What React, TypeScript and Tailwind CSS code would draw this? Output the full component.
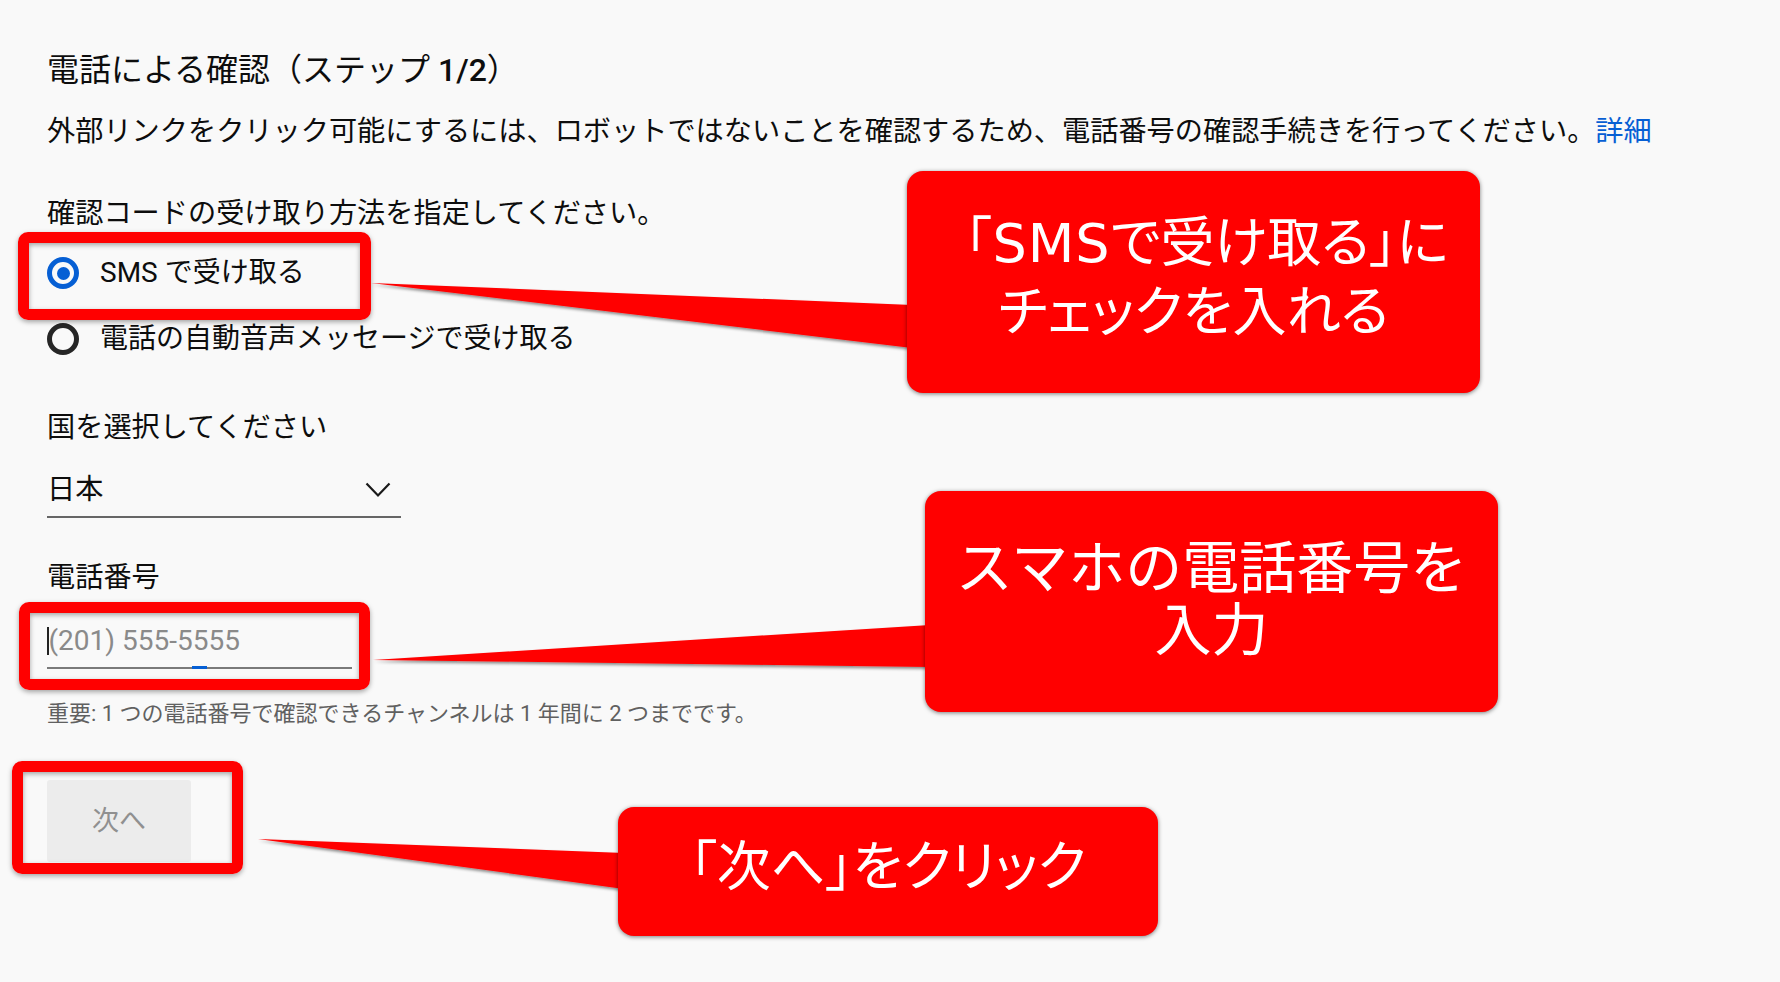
import React from "react";

const SANS = "font-['Roboto','Noto_Sans_CJK_JP',sans-serif]";
const CJK = "font-['Noto_Sans_CJK_JP',sans-serif]";

const RedFrame = ({ className }: { className: string }) => (
  <div
    className={`absolute border-[11px] border-[#ff0000] rounded-[10px] shadow-[0_2px_5px_rgba(0,0,0,0.35),inset_0_2px_5px_rgba(0,0,0,0.35)] ${className}`}
  />
);

const Callout = ({
  className,
  children,
}: {
  className: string;
  children: React.ReactNode;
}) => (
  <div
    className={`absolute flex flex-col items-center justify-center bg-[#ff0000] rounded-[16px] text-white text-center shadow-[0_1px_4px_rgba(0,0,0,0.5)] ${CJK} ${className}`}
  >
    {children}
  </div>
);

const Radio = ({ checked, label }: { checked?: boolean; label: string }) => (
  <div className="flex items-center h-[44px]">
    {checked ? (
      <span className="w-[32px] h-[32px] rounded-full border-[5px] border-[#065fd4] flex items-center justify-center">
        <span className="w-[13px] h-[13px] rounded-full bg-[#065fd4]" />
      </span>
    ) : (
      <span className="w-[32px] h-[32px] rounded-full border-[5px] border-[#262626]" />
    )}
    <span className="ml-[21px] text-[28px] leading-[36px] text-[#0d0d0d]">{label}</span>
  </div>
);

export default function App() {
  return (
    <div className={`relative w-[1780px] h-[982px] overflow-hidden bg-[#f9f9f9] ${SANS}`}>
      {/* Form */}
      <div className="pl-[47px] pt-[50px] text-[#0d0d0d]">
        <h1 className="text-[32px] leading-[40px] font-normal">
          電話による確認（ステップ <span className="font-medium">1/2</span>）
        </h1>

        <p className="mt-[24px] text-[28.2px] leading-[36px]">
          外部リンクをクリック可能にするには、ロボットではないことを確認するため、電話番号の確認手続きを行ってください。
          <span className="text-[#065fd4]">詳細</span>
        </p>

        <p className="mt-[46px] text-[28.2px] leading-[36px]">確認コードの受け取り方法を指定してください。</p>

        <div className="mt-[19px] flex flex-col gap-[22px]">
          <Radio checked label="SMS で受け取る" />
          <Radio label="電話の自動音声メッセージで受け取る" />
        </div>

        <p className="mt-[49px] text-[28.2px] leading-[36px]">国を選択してください</p>

        <div className="mt-[26px] w-[354px] flex items-center justify-between pb-[8px] border-b-2 border-[#666666]">
          <span className="text-[28.2px] leading-[36px]">日本</span>
          <svg width="26" height="16" viewBox="0 0 26 16" className="mr-[10px]">
            <polyline points="1.5,1.5 13,13.5 24.5,1.5" fill="none" stroke="#1a1a1a" strokeWidth="2.2" />
          </svg>
        </div>

        <p className="mt-[42px] text-[28.2px] leading-[36px]">電話番号</p>

        <div className="relative mt-[27px] w-[305px] pb-[8px] border-b-2 border-[#7a7a7a]">
          <div className="flex items-center">
            <span className="w-[1.5px] h-[28px] bg-[#222]" />
            <span className="text-[28px] leading-[36px] text-[#8a8a8a]">(201) 555-5555</span>
          </div>
          <span className="absolute left-[145px] bottom-[-2px] w-[15px] h-[3px] bg-[#065fd4]" />
        </div>

        <p className="mt-[31px] text-[22px] leading-[28px] text-[#606060]">
          重要: 1 つの電話番号で確認できるチャンネルは 1 年間に 2 つまでです。
        </p>

        <button className="mt-[52px] w-[144px] h-[82px] rounded-[3px] bg-[#ececec] text-[27px] text-[#909090] flex items-center justify-center">
          次へ
        </button>
      </div>

      {/* Annotation pointers */}
      <svg
        className="absolute inset-0 pointer-events-none"
        width="1780"
        height="982"
        viewBox="0 0 1780 982"
      >
        <defs>
          <filter id="ds" x="-10%" y="-50%" width="120%" height="200%">
            <feDropShadow dx="1" dy="2" stdDeviation="1.6" floodColor="#000" floodOpacity="0.45" />
          </filter>
        </defs>
        <polygon points="371,283 912,305 912,348" fill="#ff0000" filter="url(#ds)" />
        <polygon points="373,660 930,625 930,667" fill="#ff0000" filter="url(#ds)" />
        <polygon points="258,839 624,853 624,889" fill="#ff0000" filter="url(#ds)" />
      </svg>

      {/* Highlight frames */}
      <RedFrame className="left-[18px] top-[232px] w-[353px] h-[88px]" />
      <RedFrame className="left-[19px] top-[602px] w-[351px] h-[88px]" />
      <RedFrame className="left-[12px] top-[761px] w-[231px] h-[113px]" />

      {/* Callouts */}
      <Callout className="left-[907px] top-[171px] w-[573px] h-[222px] pb-[18px] text-[54px] leading-[64px] [font-feature-settings:'palt']">
        <span>
          <span className="[font-feature-settings:normal]">「</span>
          <span className="font-['DejaVu_Sans','Noto_Sans_CJK_JP',sans-serif] tracking-[1px]">SMS</span>で受け取る」に
        </span>
        <span>チェックを入れる</span>
      </Callout>
      <Callout className="left-[925px] top-[491px] w-[573px] h-[221px] pb-[16px] text-[57px] leading-[62px]">
        <span>スマホの電話番号を</span>
        <span>入力</span>
      </Callout>
      <Callout className="left-[618px] top-[807px] w-[540px] h-[129px] pb-[18px] text-[54px] leading-[64px] [font-feature-settings:'palt']">
        <span>「次へ」をクリック</span>
      </Callout>
    </div>
  );
}
